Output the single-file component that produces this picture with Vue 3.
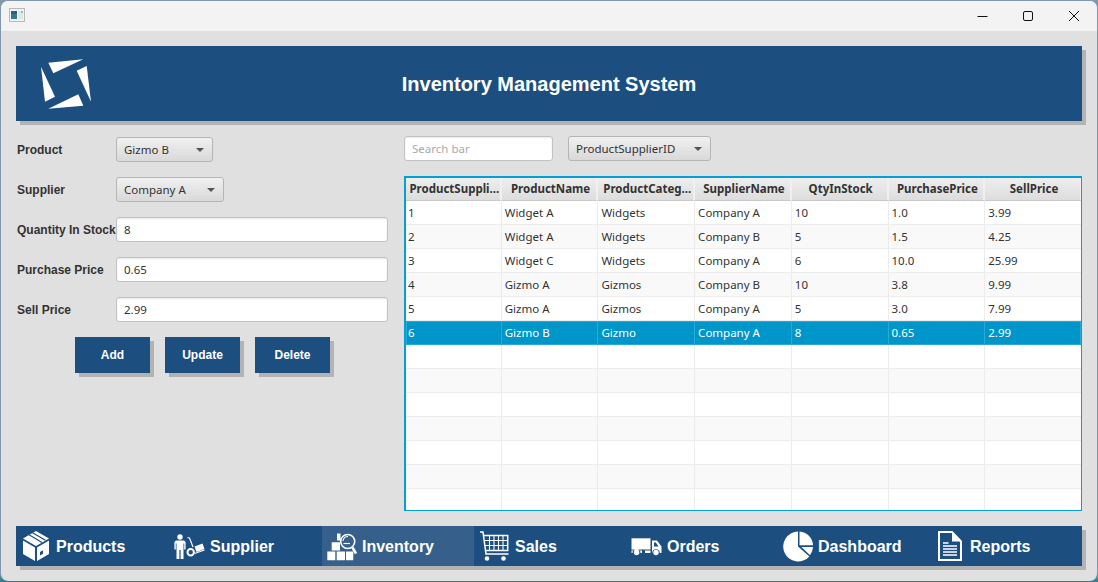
<template>
  <div class="window">
    <div class="titlebar">
      <svg class="app-icon" width="16" height="14" viewBox="0 0 16 14">
        <rect x="0.5" y="0.5" width="15" height="13" fill="#f2f2f2" stroke="#b9b9b9" />
        <rect x="2" y="3" width="6" height="8" fill="#2d7d8a" />
        <rect x="2" y="3" width="6" height="3" fill="#2a5f92" />
        <rect x="9" y="3" width="5" height="8" fill="#dfe6e4" />
        <rect x="12" y="3" width="2" height="2" fill="#7fc8a0" />
      </svg>
      <div class="win-controls">
        <svg width="12" height="12" viewBox="0 0 12 12"><path d="M1.5 6.5h10" stroke="#111" fill="none" /></svg>
        <svg width="12" height="12" viewBox="0 0 12 12"><rect x="1.5" y="1.5" width="9" height="9" rx="1.5" stroke="#111" fill="none" /></svg>
        <svg width="12" height="12" viewBox="0 0 12 12"><path d="M1 1l10 10M11 1L1 11" stroke="#111" fill="none" /></svg>
      </div>
    </div>

    <div class="content">
      <header class="banner">
        <svg class="logo" width="50" height="50" viewBox="41 59 50 50">
          <path fill="#fff" d="M48.3 62.7L83.3 59.3L53.3 73.3Z" />
          <path fill="#fff" d="M76.7 70.7L86.7 66L91 101.7Z" />
          <path fill="#fff" d="M48.3 108.7L78.3 94.3L83.3 105.7Z" />
          <path fill="#fff" d="M41 66.7L55 96.7L45 101.7Z" />
        </svg>
        <h1>Inventory Management System</h1>
      </header>

      <div class="main">
        <section class="form">
          <div class="form-row">
            <label>Product</label>
            <div class="combo product-combo"><span>Gizmo B</span><i class="arrow"></i></div>
          </div>
          <div class="form-row">
            <label>Supplier</label>
            <div class="combo supplier-combo"><span>Company A</span><i class="arrow"></i></div>
          </div>
          <div class="form-row" v-for="f in fields" :key="f.label">
            <label>{{ f.label }}</label>
            <input class="field" :value="f.value" />
          </div>
          <div class="actions">
            <button>Add</button>
            <button>Update</button>
            <button>Delete</button>
          </div>
        </section>

        <section class="right">
          <div class="search-row">
            <input class="field search" placeholder="Search bar" />
            <div class="combo column-combo"><span>ProductSupplierID</span><i class="arrow"></i></div>
          </div>
          <div class="table">
            <div class="thead">
              <div v-for="h in headers" :key="h" class="th">{{ h }}</div>
            </div>
            <div
              v-for="(row, i) in rows"
              :key="i"
              class="tr"
              :class="{ alt: i % 2 === 1, selected: i === 5 }"
            >
              <div v-for="(cell, j) in row" :key="j" class="td">{{ cell }}</div>
            </div>
          </div>
        </section>
      </div>

      <nav class="bottom-nav">
        <div class="nav-item">
          <svg class="products" width="26" height="30" viewBox="0 0 26 30">
            <path fill="#fff" d="M0 9.5L12 16.5V30L0 23Z" />
            <path fill="#fff" d="M14 16.5L26 9.5V23L14 30ZM17 21v3.5l3-1.8v-3.5Z" fill-rule="evenodd" />
            <path fill="#fff" d="M13 0L26 7.500L13 15L0 7.500Z" />
            <path d="M6 3.800L19 11.400M9.500 1.700L22.500 9.300" stroke="#1c4f80" stroke-width="1.200" fill="none" />
          </svg>
          <span>Products</span>
        </div>
        <div class="nav-item">
          <svg class="supplier" width="31" height="25" viewBox="0 0 31 25">
            <circle cx="6" cy="3" r="2.7" fill="#fff" />
            <path fill="#fff" d="M2 6.5h8l1.6 1.5v7.5h-1.4V9.5H9.5V25H6.6V16H5.4V25H2.5V9.5H1.8v6H.4V8Z" />
            <path d="M13.5 3.5l2 0.5 3.5 9" stroke="#fff" stroke-width="1.2" fill="none" />
            <circle cx="16.700" cy="18.300" r="3.200" fill="none" stroke="#fff" stroke-width="2" />
            <path fill="#fff" d="M20.500 12.500L28.500 9.500L30.500 15L22.500 18Z" />
            <path d="M20.500 19.500L30.500 16" stroke="#fff" stroke-width="1.200" />
          </svg>
          <span>Supplier</span>
        </div>
        <div class="nav-item active">
          <svg class="inventory" width="30" height="29" viewBox="0 0 30 29">
            <path fill="#fff" d="M0.300 19.500h8v8.800h-8ZM9.700 19.500h8.300v8.800h-8.300ZM19 19.500h7.300v8.800h-7.300ZM4.700 10.200h8.300v8.300h-8.300Z" />
            <path fill="#fff" d="M10 1.500h3.500v7h-3.500Z" />
            <circle cx="20.700" cy="9.500" r="7" fill="#365f8b" stroke="#fff" stroke-width="1.600" />
            <path d="M16 9a5 5 0 0 1 5-4.500" stroke="#fff" stroke-width="1.200" fill="none" />
            <path d="M16.500 11.500h6.500" stroke="#fff" stroke-width="1.200" fill="none" />
            <path d="M25.500 15.500L29 21.500" stroke="#fff" stroke-width="2.600" />
          </svg>
          <span>Inventory</span>
        </div>
        <div class="nav-item">
          <svg class="sales" width="29" height="30" viewBox="0 0 29 30">
            <path d="M0 1h3l3 22h22.500" stroke="#fff" stroke-width="1.500" fill="none" />
            <path d="M3.500 4.500H27.700V19.500H5.500" stroke="#fff" stroke-width="1.500" fill="none" />
            <path d="M9.500 4.500V19.500M14 4.500V19.500M18.500 4.500V19.500M23 4.500V19.500M4 9.500H27.700M4.800 14.500H27.700" stroke="#fff" stroke-width="1.100" fill="none" />
            <circle cx="7" cy="27.500" r="2.300" fill="#fff" />
            <circle cx="23.500" cy="27.500" r="2.300" fill="#fff" />
          </svg>
          <span>Sales</span>
        </div>
        <div class="nav-item">
          <svg class="orders" width="31" height="18" viewBox="0 0 31 18">
            <path fill="#fff" d="M0.500 0.300H19.500V11.500H0.500Z" />
            <path fill="#fff" d="M0.500 12.500H11V15H9.500a4 4 0 0 0-8 0H0.500ZM14 12.500H19.500V15H14Z" />
            <path fill="#fff" d="M21 2.500H26L30.500 8.500V15H28.800a3.800 3.800 0 0 0-7.600 0H21ZM23 4.500V8.500H27.500L24.800 4.500Z" fill-rule="evenodd" />
            <circle cx="5.600" cy="14.500" r="2.700" fill="#fff" />
            <circle cx="25" cy="14.500" r="2.700" fill="#fff" />
          </svg>
          <span>Orders</span>
        </div>
        <div class="nav-item">
          <svg class="dashboard" width="31" height="31" viewBox="0 0 31 31">
            <path fill="#fff" d="M15 15.500L15 0.500A15 15 0 1 0 26.400 25.500Z" />
            <path fill="#fff" d="M16.500 0.500A14.500 14.500 0 0 1 30 14.200H16.500Z" />
            <path fill="#fff" d="M18.500 16H30A14.500 14.500 0 0 1 27 24.200Z" />
          </svg>
          <span>Dashboard</span>
        </div>
        <div class="nav-item">
          <svg class="reports" width="24" height="30" viewBox="0 0 24 30">
            <path d="M1 1H14L23 10.500V29H1Z" stroke="#fff" stroke-width="2" fill="none" />
            <path fill="#fff" d="M14 1L23.500 10.500H14Z" />
            <path d="M5 12H10.500M5 15H19M5 18H19M5 21H19M5 24H19" stroke="#fff" stroke-width="1.300" fill="none" />
          </svg>
          <span>Reports</span>
        </div>
      </nav>
    </div>
  </div>
</template>

<script setup>
const fields = [
  { label: 'Quantity In Stock', value: '8' },
  { label: 'Purchase Price', value: '0.65' },
  { label: 'Sell Price', value: '2.99' }
];

const headers = [
  'ProductSuppli...',
  'ProductName',
  'ProductCateg...',
  'SupplierName',
  'QtyInStock',
  'PurchasePrice',
  'SellPrice'
];

const data = [
  ['1', 'Widget A', 'Widgets', 'Company A', '10', '1.0', '3.99'],
  ['2', 'Widget A', 'Widgets', 'Company B', '5', '1.5', '4.25'],
  ['3', 'Widget C', 'Widgets', 'Company A', '6', '10.0', '25.99'],
  ['4', 'Gizmo A', 'Gizmos', 'Company B', '10', '3.8', '9.99'],
  ['5', 'Gizmo A', 'Gizmos', 'Company A', '5', '3.0', '7.99'],
  ['6', 'Gizmo B', 'Gizmo', 'Company A', '8', '0.65', '2.99']
];

// the empty rows still draw their cell lines
const rows = [...data, ...Array.from({ length: 7 }, () => Array(7).fill(''))];
</script>

<style>
html {
  height: 100%;
  background: linear-gradient(#7f98ad 0, #7f98ad 572px, #2f7f8f 581px);
}
body {
  margin: 0;
}
</style>

<style scoped>
.window {
  box-sizing: border-box;
  width: 1098px;
  height: 581px;
  border: 1px solid #7f98ad;
  border-bottom-width: 0;
  border-radius: 8px;
  background: #e0e0e0;
  overflow: hidden;
  font-family: "Liberation Sans", Arial, sans-serif;
}
.titlebar {
  height: 30px;
  background: #f3f3f3;
  display: flex;
  align-items: center;
  justify-content: space-between;
  padding-left: 8px;
}
.app-icon {
  margin-top: -2px;
}
.win-controls {
  display: flex;
  gap: 34px;
  padding-right: 17px;
  margin-top: -1px;
}
.content {
  padding: 15px 15px 0;
}
.banner {
  height: 75px;
  background: #1c4f80;
  box-shadow: 4px 4px 0 #b3b3b3;
  display: grid;
  grid-template-columns: 1fr auto 1fr;
  align-items: center;
}
.logo {
  margin-left: 25px;
  margin-top: 1px;
}
.banner h1 {
  margin: 0;
  padding-top: 2px;
  color: #fff;
  font-size: 20px;
  font-weight: bold;
}
.main {
  display: flex;
  gap: 16px;
  margin-top: 15px;
}
.form {
  width: 372px;
  flex: none;
  padding-top: 1px;
}
.form-row {
  display: flex;
  align-items: center;
  height: 25px;
  margin-bottom: 15px;
}
.form-row label {
  width: 99px;
  padding-left: 1px;
  flex: none;
  font-size: 12px;
  font-weight: bold;
  color: #333;
  white-space: nowrap;
}
.combo {
  box-sizing: border-box;
  height: 25px;
  display: flex;
  align-items: center;
  justify-content: space-between;
  padding: 0 8px 0 7px;
  border: 1px solid #b5b5b5;
  border-radius: 3px;
  background: linear-gradient(#f0f0f0, #d9d9d9);
  font-family: "Noto Sans", sans-serif;
  font-size: 11.5px;
  color: #333;
}
.arrow {
  width: 0;
  height: 0;
  border-left: 4px solid transparent;
  border-right: 4px solid transparent;
  border-top: 4px solid #555;
}
.product-combo {
  width: 97px;
}
.supplier-combo {
  width: 108px;
}
.column-combo {
  width: 143px;
}
.field {
  box-sizing: border-box;
  flex: 1;
  min-width: 0;
  height: 25px;
  padding: 0 7px;
  border: 1px solid #c2c2c2;
  border-radius: 3px;
  background: #fff;
  box-shadow: inset 0 1px 2px #e6e6e6;
  font-family: "Noto Sans", sans-serif;
  font-size: 11.5px;
  color: #333;
  outline: none;
}
.field::placeholder {
  color: #aaa;
  opacity: 1;
}
.actions {
  display: flex;
  gap: 15px;
  padding-left: 59px;
}
.actions button {
  width: 75px;
  height: 36px;
  padding: 0;
  border: none;
  background: #1c4f80;
  box-shadow: 4px 4px 0 #b3b3b3;
  color: #fff;
  font-family: "Liberation Sans", Arial, sans-serif;
  font-size: 12px;
  font-weight: bold;
}
.right {
  width: 678px;
  flex: none;
}
.search-row {
  display: flex;
  gap: 15px;
  margin-bottom: 15px;
}
.search {
  flex: none;
  width: 149px;
}
.table {
  box-sizing: border-box;
  height: 335px;
  border: 2px solid #03a0d6;
  border-right-width: 1px;
  border-bottom-width: 1px;
  background: #fff;
  overflow: hidden;
  font-family: "Noto Sans", sans-serif;
  font-size: 11.5px;
  color: #333;
}
.thead,
.tr {
  display: grid;
  grid-template-columns: 95.71px repeat(6, 96.71px);
}
.thead {
  height: 23px;
  background: linear-gradient(#eeeeee, #dcdcdc);
}
.th {
  box-sizing: border-box;
  line-height: 22px;
  text-align: center;
  font-weight: bold;
  white-space: nowrap;
  overflow: hidden;
  border-right: 2px solid #f0f0f0;
  border-bottom: 1px solid #c8c8c8;
  padding: 0 0 0 3px;
}
.tr {
  height: 24px;
  background: #fff;
}
.tr.alt {
  background: #f9f9f9;
}
.td {
  box-sizing: border-box;
  line-height: 23px;
  padding-left: 3px;
  border-right: 1px solid #ececec;
  border-bottom: 1px solid #ececec;
  white-space: nowrap;
  overflow: hidden;
}
.td:first-child {
  padding-left: 2px;
}
.tr.selected {
  background: #0096c9;
  color: #fff;
  box-shadow: inset 0 0 0 1px #2aa9d6, 0 -1px 0 #0096c9;
}
.tr.selected .td {
  border-color: #2aa9d6;
}
.bottom-nav {
  display: flex;
  height: 40px;
  margin-top: 15px;
  background: #1c4f80;
  box-shadow: 4px 4px 0 #b3b3b3;
}
.nav-item {
  width: 153px;
  flex: none;
  display: flex;
  align-items: center;
  color: #fff;
  font-size: 16px;
  font-weight: bold;
}
.nav-item span {
  padding-top: 2px;
}
.nav-item.active {
  background: #365f8b;
  width: 152px;
  margin-right: 1px;
}
.products {
  margin: 0 7px 0 7px;
}
.supplier {
  margin: 0 5px 0 5px;
}
.inventory {
  margin: 0 5px 0 5px;
}
.sales {
  margin: 0 6px 0 5px;
}
.orders {
  margin: 1px 5px 0 3px;
}
.dashboard {
  margin: 0 4px 0 2px;
}
.reports {
  margin: 0 8px 0 4px;
}
</style>
